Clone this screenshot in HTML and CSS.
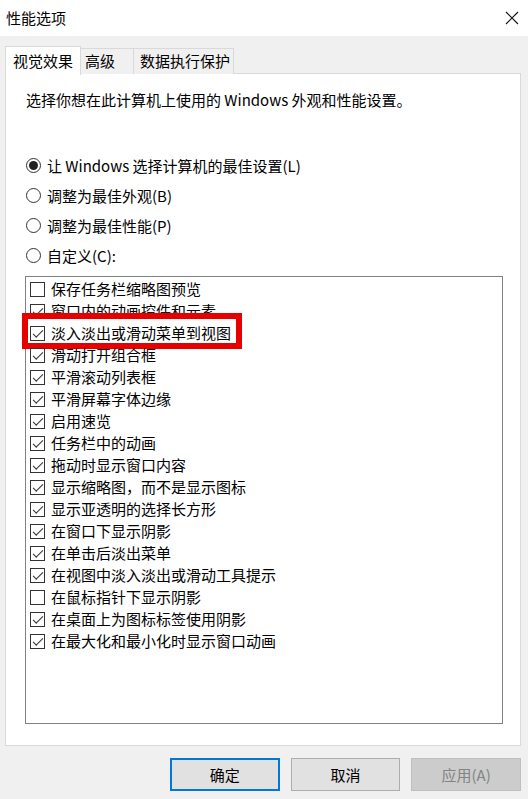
FILE: index.html
```html
<!DOCTYPE html>
<html lang="zh-CN">
<head>
<meta charset="utf-8">
<title>性能选项</title>
<link rel="stylesheet" href="styles.css">
</head>
<body>
<div class="window">
  <div class="titlebar">
    <span class="title">性能选项</span>
    <svg class="close" width="14" height="14" viewBox="0 0 14 14"><path d="M1 1 L13 13 M13 1 L1 13" stroke="#111" stroke-width="1.1" fill="none"/></svg>
  </div>
  <div class="body">
    <div class="tabs">
      <div class="tab active">视觉效果</div>
      <div class="tab">高级</div>
      <div class="tab">数据执行保护</div>
    </div>
    <div class="panel">
      <p class="desc">选择你想在此计算机上使用的 Windows 外观和性能设置。</p>
      <div class="radios">
        <div class="radio-row"><span class="radio checked"></span><span>让 Windows 选择计算机的最佳设置(L)</span></div>
        <div class="radio-row"><span class="radio"></span><span>调整为最佳外观(B)</span></div>
        <div class="radio-row"><span class="radio"></span><span>调整为最佳性能(P)</span></div>
        <div class="radio-row"><span class="radio"></span><span>自定义(C):</span></div>
      </div>
      <div class="list">
        <div class="item"><span class="cb"></span><span>保存任务栏缩略图预览</span></div>
        <div class="item"><span class="cb on"></span><span>窗口内的动画控件和元素</span></div>
        <div class="item marked"><span class="cb on"></span><span>淡入淡出或滑动菜单到视图</span><span class="mark"></span></div>
        <div class="item"><span class="cb on"></span><span>滑动打开组合框</span></div>
        <div class="item"><span class="cb on"></span><span>平滑滚动列表框</span></div>
        <div class="item"><span class="cb on"></span><span>平滑屏幕字体边缘</span></div>
        <div class="item"><span class="cb on"></span><span>启用速览</span></div>
        <div class="item"><span class="cb on"></span><span>任务栏中的动画</span></div>
        <div class="item"><span class="cb on"></span><span>拖动时显示窗口内容</span></div>
        <div class="item"><span class="cb on"></span><span>显示缩略图，而不是显示图标</span></div>
        <div class="item"><span class="cb on"></span><span>显示亚透明的选择长方形</span></div>
        <div class="item"><span class="cb on"></span><span>在窗口下显示阴影</span></div>
        <div class="item"><span class="cb on"></span><span>在单击后淡出菜单</span></div>
        <div class="item"><span class="cb on"></span><span>在视图中淡入淡出或滑动工具提示</span></div>
        <div class="item"><span class="cb"></span><span>在鼠标指针下显示阴影</span></div>
        <div class="item"><span class="cb on"></span><span>在桌面上为图标标签使用阴影</span></div>
        <div class="item"><span class="cb on"></span><span>在最大化和最小化时显示窗口动画</span></div>
      </div>
    </div>
    <div class="buttons">
      <button class="btn default">确定</button>
      <button class="btn">取消</button>
      <button class="btn disabled">应用(A)</button>
    </div>
  </div>
</div>
</body>
</html>
```

FILE: styles.css
```css
* { box-sizing: border-box; }
html, body { margin: 0; padding: 0; }
body {
  width: 528px;
  height: 799px;
  background: #f0f0f0;
  font-family: "Noto Sans CJK SC", "Microsoft YaHei", "Noto Sans", sans-serif;
  font-size: 15px;
  color: #000;
  overflow: hidden;
}
.titlebar {
  height: 36px;
  background: #fff;
  display: flex;
  align-items: center;
  justify-content: space-between;
  padding: 0 9px 0 6px;
}
.title { font-size: 15px; line-height: 20px; color: #000; }
.close { display: block; }
.body { padding: 10px 7px 0 5px; }
.tabs {
  display: flex;
  align-items: flex-end;
  height: 28px;
  position: relative;
  z-index: 1;
}
.tab {
  height: 26px;
  line-height: 24px;
  padding: 0 4px 0 4px;
  border: 1px solid #d9d9d9;
  border-bottom: none;
  background: #f0f0f0;
  margin-left: -1px;
  white-space: nowrap;
}
.tab:nth-child(2) { width: 54px; }
.tab:nth-child(3) { width: 101px; padding-left: 6px; }
.tab.active {
  height: 29px;
  width: 76px;
  margin-left: 0;
  background: #fff;
  line-height: 27px;
  padding-left: 7px;
  margin-bottom: -1px;
}
.panel {
  background: #fff;
  border: 1px solid #d9d9d9;
  width: 516px;
  height: 673px;
  margin-top: -1px;
  padding: 0 0 0 19px;
}
.desc {
  margin: 16px 0 0 1px;
  line-height: 20px;
}
.radios { margin-top: 40px; }
.radio-row {
  height: 30px;
  display: flex;
  align-items: center;
  padding-left: 1px;
}
.radio {
  width: 15px;
  height: 15px;
  border: 1px solid #333;
  border-radius: 50%;
  margin-right: 6px;
  position: relative;
  flex: none;
}
.radio.checked::after {
  content: "";
  position: absolute;
  left: 2px; top: 2px;
  width: 9px; height: 9px;
  border-radius: 50%;
  background: #222;
}
.list {
  margin-top: 6px;
  width: 478px;
  height: 448px;
  border: 1px solid #828282;
  padding-top: 1px;
}
.item {
  height: 22px;
  display: flex;
  align-items: center;
  padding-left: 4px;
  position: relative;
  line-height: 20px;
}
.cb {
  width: 15px;
  height: 15px;
  border: 1px solid #333;
  margin-right: 6px;
  flex: none;
  position: relative;
  background: #fff;
}
.cb.on::after {
  content: "";
  position: absolute;
  left: 3px; top: 1px;
  width: 9px; height: 4px;
  border-left: 1px solid #333;
  border-bottom: 1px solid #333;
  transform: translate(-1px, 2px) rotate(-45deg);
}
.mark {
  position: absolute;
  left: -4px;
  top: -9px;
  width: 220px;
  height: 36px;
  border: 6px solid #e60000;
  pointer-events: none;
}
.buttons {
  display: flex;
  gap: 11px;
  margin-top: 12px;
  padding-left: 165px;
}
.btn {
  width: 110px;
  height: 33px;
  font-family: inherit;
  font-size: 15px;
  background: #e1e1e1;
  border: 1px solid #adadad;
  color: #000;
  padding: 0;
}
.btn.default { border: 2px solid #0078d7; }
.btn.disabled {
  background: #cccccc;
  border-color: #bfbfbf;
  color: #838383;
}
```
